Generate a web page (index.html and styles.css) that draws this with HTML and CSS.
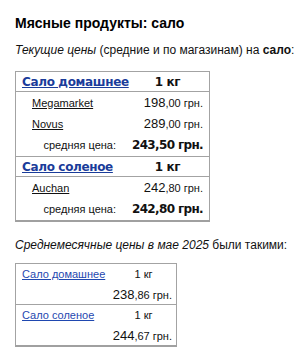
FILE: index.html
```html
<!DOCTYPE html>
<html lang="ru">
<head>
<meta charset="utf-8">
<link rel="stylesheet" href="styles.css">
</head>
<body>
<div class="page">
  <h1 class="title">Мясные продукты: сало</h1>
  <p class="intro"><i>Текущие цены</i> (средние и по магазинам) на <b>сало</b>:</p>

  <table class="current">
    <tbody class="grp">
      <tr class="head">
        <th class="hname"><a href="#">Сало домашнее</a></th>
        <th class="unit">1 кг</th>
      </tr>
      <tr class="store">
        <td class="sname"><a href="#">Megamarket</a></td>
        <td class="price"><span class="int">198</span>,00 грн.</td>
      </tr>
      <tr class="store">
        <td class="sname"><a href="#">Novus</a></td>
        <td class="price"><span class="int">289</span>,00 грн.</td>
      </tr>
      <tr class="avg">
        <td class="label">средняя цена:</td>
        <td class="aprice">243,50 грн.</td>
      </tr>
    </tbody>
    <tbody class="grp">
      <tr class="head">
        <th class="hname"><a href="#">Сало соленое</a></th>
        <th class="unit">1 кг</th>
      </tr>
      <tr class="store">
        <td class="sname"><a href="#">Auchan</a></td>
        <td class="price"><span class="int">242</span>,80 грн.</td>
      </tr>
      <tr class="avg">
        <td class="label">средняя цена:</td>
        <td class="aprice">242,80 грн.</td>
      </tr>
    </tbody>
  </table>

  <p class="intro month"><i>Среднемесячные цены в мае 2025</i> были такими:</p>

  <table class="monthly">
    <tbody class="grp">
      <tr>
        <td class="mname"><a href="#">Сало домашнее</a></td>
        <td class="munit">1 кг</td>
      </tr>
      <tr>
        <td></td>
        <td class="mprice"><span class="int">238</span>,86 грн.</td>
      </tr>
    </tbody>
    <tbody class="grp">
      <tr>
        <td class="mname"><a href="#">Сало соленое</a></td>
        <td class="munit">1 кг</td>
      </tr>
      <tr>
        <td></td>
        <td class="mprice"><span class="int">244</span>,67 грн.</td>
      </tr>
    </tbody>
  </table>
</div>
</body>
</html>
```

FILE: styles.css
```css
html, body {
  margin: 0;
  padding: 0;
  background: #ffffff;
}

body {
  font-family: "Liberation Sans", Arial, sans-serif;
  color: #111111;
}

.page {
  padding: 14px 0 0 15px;
}

.title {
  margin: 0;
  font-size: 14px;
  line-height: 18px;
  font-weight: bold;
  color: #000000;
}

.intro {
  margin: 10px 0 0 0;
  font-size: 12px;
  line-height: 16px;
  color: #111111;
}

.intro.month {
  margin-top: 15px;
}

table {
  border-collapse: collapse;
  border: 1px solid #a3a3a3;
  border-bottom: 2px solid #a0a0a0;
}

.current {
  margin-top: 13px;
  width: 195px;
  table-layout: fixed;
}

.grp + .grp {
  border-top: 1px solid #a3a3a3;
}

th, td {
  padding: 0;
  font-weight: normal;
  white-space: nowrap;
}

.head th {
  height: 19px;
  border-bottom: 1px solid #a3a3a3;
  font-family: "DejaVu Sans", Verdana, sans-serif;
  font-weight: bold;
  font-size: 12px;
  letter-spacing: -0.35px;
}

.hname {
  text-align: left;
  padding-left: 6px;
  width: 102px;
}

.hname a {
  color: #1a3c9a;
  text-decoration: underline;
}

.unit {
  text-align: center;
  color: #111111;
  padding-left: 2px;
}

.store td {
  height: 21px;
  font-size: 11px;
}

.sname {
  padding-left: 16px;
}

.sname a {
  color: #111111;
  text-decoration: underline;
}

.price, .mprice {
  text-align: right;
  padding-right: 6px;
  font-size: 10.5px;
}

.int {
  font-size: 13px;
}

.avg td {
  height: 22px;
}

.label {
  text-align: right;
  font-size: 11px;
  padding-right: 8px;
}

.aprice {
  text-align: right;
  padding-right: 6px;
  font-family: "DejaVu Sans", Verdana, sans-serif;
  font-weight: bold;
  font-size: 12px;
  letter-spacing: -0.65px;
}

.monthly {
  margin-top: 10px;
  width: 162px;
}

.monthly td {
  height: 20px;
  font-size: 11px;
}

.mname {
  padding-left: 6px;
  width: 89px;
}

.mname a {
  color: #1f48b0;
  text-decoration: underline;
}

.munit {
  text-align: center;
  font-size: 11.5px;
}

.mprice {
  padding-right: 4px;
}
```
